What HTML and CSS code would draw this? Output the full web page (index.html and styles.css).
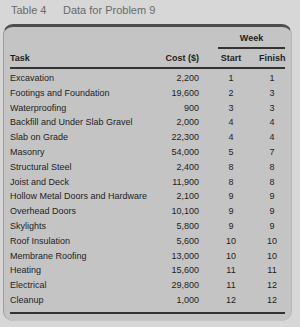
FILE: index.html
```html
<!DOCTYPE html>
<html>
<head>
<meta charset="utf-8">
<link rel="stylesheet" href="styles.css">
</head>
<body>
<div class="title"><span class="num">Table 4</span><span>Data for Problem 9</span></div>
<div class="panel">
  <div class="row week-row"><div class="week">Week</div></div>
  <div class="row head">
    <div>Task</div><div class="r">Cost ($)</div><div></div><div class="c">Start</div><div></div><div class="c">Finish</div>
  </div>
  <div class="body">
    <div class="row"><div>Excavation</div><div class="r">2,200</div><div></div><div class="c">1</div><div></div><div class="c">1</div></div>
    <div class="row"><div>Footings and Foundation</div><div class="r">19,600</div><div></div><div class="c">2</div><div></div><div class="c">3</div></div>
    <div class="row"><div>Waterproofing</div><div class="r">900</div><div></div><div class="c">3</div><div></div><div class="c">3</div></div>
    <div class="row"><div>Backfill and Under Slab Gravel</div><div class="r">2,000</div><div></div><div class="c">4</div><div></div><div class="c">4</div></div>
    <div class="row"><div>Slab on Grade</div><div class="r">22,300</div><div></div><div class="c">4</div><div></div><div class="c">4</div></div>
    <div class="row"><div>Masonry</div><div class="r">54,000</div><div></div><div class="c">5</div><div></div><div class="c">7</div></div>
    <div class="row"><div>Structural Steel</div><div class="r">2,400</div><div></div><div class="c">8</div><div></div><div class="c">8</div></div>
    <div class="row"><div>Joist and Deck</div><div class="r">11,900</div><div></div><div class="c">8</div><div></div><div class="c">8</div></div>
    <div class="row"><div>Hollow Metal Doors and Hardware</div><div class="r">2,100</div><div></div><div class="c">9</div><div></div><div class="c">9</div></div>
    <div class="row"><div>Overhead Doors</div><div class="r">10,100</div><div></div><div class="c">9</div><div></div><div class="c">9</div></div>
    <div class="row"><div>Skylights</div><div class="r">5,800</div><div></div><div class="c">9</div><div></div><div class="c">9</div></div>
    <div class="row"><div>Roof Insulation</div><div class="r">5,600</div><div></div><div class="c">10</div><div></div><div class="c">10</div></div>
    <div class="row"><div>Membrane Roofing</div><div class="r">13,000</div><div></div><div class="c">10</div><div></div><div class="c">10</div></div>
    <div class="row"><div>Heating</div><div class="r">15,600</div><div></div><div class="c">11</div><div></div><div class="c">11</div></div>
    <div class="row"><div>Electrical</div><div class="r">29,800</div><div></div><div class="c">11</div><div></div><div class="c">12</div></div>
    <div class="row"><div>Cleanup</div><div class="r">1,000</div><div></div><div class="c">12</div><div></div><div class="c">12</div></div>
  </div>
</div>
</body>
</html>
```
FILE: styles.css
```css
html, body {
  margin: 0;
  padding: 0;
  background: #d7d7d7;
  width: 300px;
  height: 327px;
  overflow: hidden;
}
body {
  font-family: "Liberation Sans", Arial, sans-serif;
}
.title {
  margin: 0;
  padding: 4px 0 0 11px;
  height: 13px;
  line-height: 13px;
  font-size: 11px;
  color: #6a6a6a;
}
.title .num {
  display: inline-block;
  width: 52px;
}
.panel {
  margin: 7px 8px 0 3px;
  height: 290px;
  background: #c4c4c4;
  border-top: 3px solid #4e4e4e;
  border-left: 1px solid #9c9c9c;
  border-right: 1px solid #b6b6b6;
  border-radius: 10px;
  padding: 4px 0 0 6px;
  box-sizing: content-box;
  font-size: 9px;
  color: #1e1e1e;
}
.row {
  display: grid;
  grid-template-columns: 150px 39px 12px 40px 8px 26px;
  width: 275px;
  height: 14.8px;
  line-height: 14.8px;
  white-space: nowrap;
}
.r { text-align: right; }
.c { text-align: center; }
.week-row {
  display: block;
  height: 14px;
  line-height: 14px;
}
.week {
  margin-left: 208px;
  width: 67px;
  text-align: center;
  font-weight: bold;
  border-bottom: 2px solid #333;
  padding-bottom: 2px;
}
.head {
  height: 14px;
  line-height: 14px;
  padding-top: 6px;
  padding-bottom: 2px;
  font-weight: bold;
  border-bottom: 2px solid #333;
}
.body {
  width: 275px;
  padding-top: 2px;
  padding-bottom: 4px;
  border-bottom: 2px solid #333;
}
```
